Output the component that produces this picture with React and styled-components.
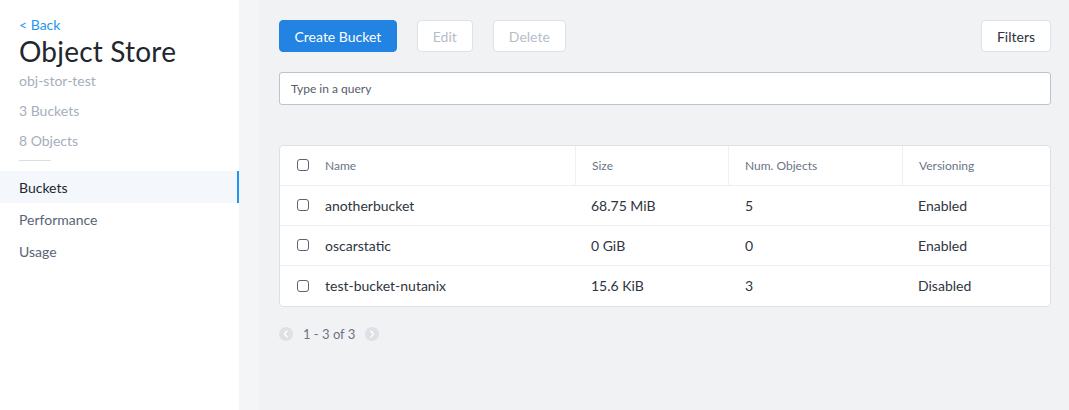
import React from "react";
import styled, { createGlobalStyle } from "styled-components";

const Global = createGlobalStyle`
  html, body { margin: 0; padding: 0; height: 100%; }
  body { font-family: Lato, "Open Sans", "Liberation Sans", sans-serif; background: #fff; }
  #root { height: 410px; }
  * { box-sizing: border-box; }
`;

const Page = styled.div`
  display: flex;
  height: 410px;
  width: 1069px;
  overflow: hidden;
`;

const Sidebar = styled.aside`
  width: 239px;
  flex: none;
  background: #fff;
  padding-top: 16px;
  display: flex;
  flex-direction: column;
`;

const Info = styled.div`
  padding: 0 19px;
  display: flex;
  flex-direction: column;
`;

const BackLink = styled.a`
  color: #1e95ef;
  font-size: 14px;
  line-height: 18px;
  text-decoration: none;
`;

const Title = styled.h1`
  margin: 0;
  font-weight: 400;
  font-size: 28px;
  line-height: 34px;
  color: #22272e;
  letter-spacing: 0.2px;
`;

const Meta = styled.div`
  color: #a6aebb;
  font-size: 14px;
  line-height: 18px;
  margin-top: ${(p) => p.$mt ?? 12}px;
`;

const Divider = styled.div`
  width: 32px;
  height: 1px;
  background: #d9dee6;
  margin-top: 10px;
`;

const Nav = styled.nav`
  margin-top: 10px;
  display: flex;
  flex-direction: column;
`;

const NavItem = styled.div`
  height: 32px;
  display: flex;
  align-items: center;
  padding-left: 19px;
  font-size: 14px;
  color: ${(p) => (p.$active ? "#22272e" : "#5a6476")};
  background: ${(p) => (p.$active ? "#f4f8fc" : "transparent")};
  border-right: 2px solid ${(p) => (p.$active ? "#1e95ef" : "transparent")};
`;

const Gutter = styled.div`
  width: 20px;
  flex: none;
  background: #f4f5f7;
`;

const Main = styled.main`
  flex: 1;
  background: #f1f2f4;
  padding: 20px 18px 0 20px;
  display: flex;
  flex-direction: column;
`;

const Toolbar = styled.div`
  display: flex;
  align-items: center;
  gap: 20px;
`;

const Button = styled.button`
  height: 32px;
  padding: 0 ${(p) => p.$px ?? 15}px;
  border-radius: 4px;
  font-family: inherit;
  font-size: 14px;
  border: 1px solid ${(p) => (p.$primary ? "#2283e2" : "#dde1e8")};
  background: ${(p) => (p.$primary ? "#2283e2" : "#fff")};
  color: ${(p) => (p.$primary ? "#fff" : p.$disabled ? "#b6bdca" : "#2d333c")};
  cursor: pointer;
`;

const Spacer = styled.div`
  flex: 1;
`;

const Search = styled.input`
  margin-top: 20px;
  height: 33px;
  width: 100%;
  border: 1px solid #bcc3cf;
  border-radius: 3px;
  background: #fff;
  padding: 0 11px;
  font-family: inherit;
  font-size: 12px;
  color: #333;
  outline: none;
  &::placeholder { color: #555d6b; }
`;

const Table = styled.div`
  margin-top: 40px;
  background: #fff;
  border: 1px solid #dde1e6;
  border-radius: 4px;
`;

const Row = styled.div`
  display: grid;
  grid-template-columns: 37px 258px 153px 174px 1fr;
  height: 40px;
  align-items: stretch;
  border-bottom: ${(p) => (p.$last ? "none" : "1px solid #eceef2")};
`;

const Cell = styled.div`
  display: flex;
  align-items: center;
  padding-left: ${(p) => p.$pl ?? 16}px;
  padding-bottom: ${(p) => (p.$head ? 0 : 1)}px;
  font-size: ${(p) => (p.$head ? 12 : 14)}px;
  color: ${(p) => (p.$head ? "#6a7486" : "#2f353e")};
  border-left: ${(p) => (p.$sep ? "1px solid #eef0f3" : "none")};
`;

const Check = styled.span`
  width: 12px;
  height: 12px;
  border: 1px solid #5b6577;
  border-radius: 3px;
  background: #fff;
  display: inline-block;
`;

const Pager = styled.div`
  margin-top: 19px;
  display: flex;
  align-items: center;
  gap: 10px;
  font-size: 13px;
  color: #6a7486;
`;

const PageDot = styled.span`
  width: 14px;
  height: 14px;
  border-radius: 50%;
  background: #dde0e5;
  display: inline-flex;
  align-items: center;
  justify-content: center;
`;

const Chevron = ({ dir }) => (
  <svg width="6" height="8" viewBox="0 0 6 8">
    <path
      d={dir === "left" ? "M4 1 L1.5 4 L4 7" : "M2 1 L4.5 4 L2 7"}
      fill="none"
      stroke="#fff"
      strokeWidth="1.4"
      strokeLinecap="round"
      strokeLinejoin="round"
    />
  </svg>
);

const rows = [
  ["anotherbucket", "68.75 MiB", "5", "Enabled"],
  ["oscarstatic", "0 GiB", "0", "Enabled"],
  ["test-bucket-nutanix", "15.6 KiB", "3", "Disabled"],
];

export default function App() {
  return (
    <>
      <Global />
      <Page>
        <Sidebar>
          <Info>
            <BackLink href="#">&lt; Back</BackLink>
            <Title>Object Store</Title>
            <Meta $mt={4}>obj-stor-test</Meta>
            <Meta>3 Buckets</Meta>
            <Meta>8 Objects</Meta>
            <Divider />
          </Info>
          <Nav>
            <NavItem $active>Buckets</NavItem>
            <NavItem>Performance</NavItem>
            <NavItem>Usage</NavItem>
          </Nav>
        </Sidebar>
        <Gutter />
        <Main>
          <Toolbar>
            <Button $primary $px={14.5}>Create Bucket</Button>
            <Button $disabled>Edit</Button>
            <Button $disabled>Delete</Button>
            <Spacer />
            <Button>Filters</Button>
          </Toolbar>
          <Search placeholder="Type in a query" />
          <Table>
            <Row>
              <Cell $pl={17}><Check /></Cell>
              <Cell $head $pl={8}>Name</Cell>
              <Cell $head $sep>Size</Cell>
              <Cell $head $sep>Num. Objects</Cell>
              <Cell $head $sep>Versioning</Cell>
            </Row>
            {rows.map((r, i) => (
              <Row key={r[0]} $last={i === rows.length - 1}>
                <Cell $pl={17}><Check /></Cell>
                <Cell $pl={8}>{r[0]}</Cell>
                <Cell $pl={16}>{r[1]}</Cell>
                <Cell $pl={17}>{r[2]}</Cell>
                <Cell $pl={16}>{r[3]}</Cell>
              </Row>
            ))}
          </Table>
          <Pager>
            <PageDot><Chevron dir="left" /></PageDot>
            <span>1 - 3 of 3</span>
            <PageDot><Chevron dir="right" /></PageDot>
          </Pager>
        </Main>
      </Page>
    </>
  );
}
